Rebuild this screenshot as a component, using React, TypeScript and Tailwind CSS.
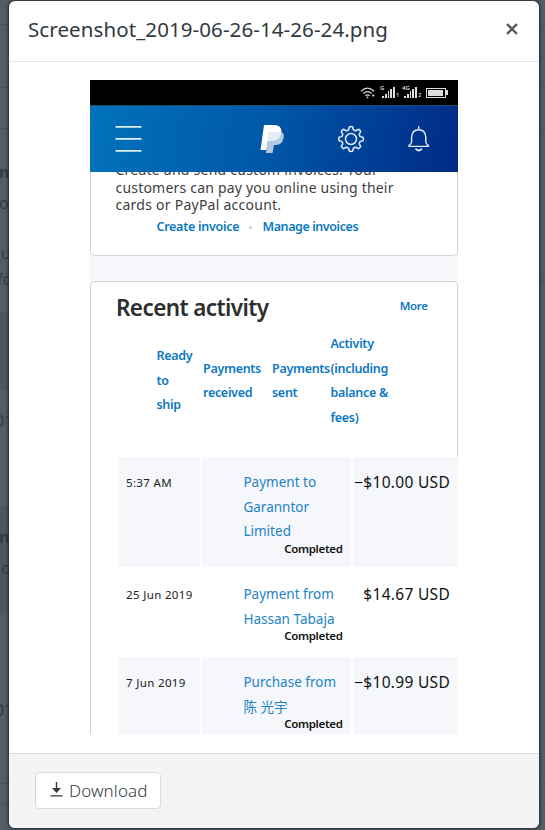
import React from "react";

type Payment = { date: string; lines: string[]; amount: string; height: string; shaded: boolean };

const payments: Payment[] = [
  { date: "5:37 AM", lines: ["Payment to", "Garanntor", "Limited"], amount: "−$10.00 USD", height: "h-[110px]", shaded: true },
  { date: "25 Jun 2019", lines: ["Payment from", "Hassan Tabaja"], amount: "$14.67 USD", height: "h-[86px]", shaded: false },
  { date: "7 Jun 2019", lines: ["Purchase from", "陈 光宇"], amount: "−$10.99 USD", height: "h-[86px]", shaded: true },
];

const ui = "font-['Noto_Sans','Open_Sans',sans-serif]";
const phone = "font-['Noto_Sans','Noto_Sans_CJK_SC',sans-serif]";

// Dimmed page that shows at both sides of the dialog
function Backdrop() {
  const left: [string, string][] = [
    ["left-[-1px] top-[162px] font-bold", "n"],
    ["left-[-1px] top-[193px]", "o"],
    ["left-px top-[243px]", "u"],
    ["left-[-3px] top-[269px]", "fo"],
    ["left-[-5px] top-[411px] text-[#2a4f6a]", "01"],
    ["left-[-1px] top-[527px] font-bold", "n"],
    ["left-px top-[558px]", "o"],
    ["left-[-5px] top-[700px] text-[#2a4f6a]", "01"],
  ];
  return (
    <div className={`absolute inset-0 overflow-hidden ${ui}`}>
      <div className="absolute left-0 top-[24px] h-px w-full bg-[#4b545a]" />
      <div className="absolute left-0 top-[87px] h-px w-full bg-[#4b545a]" />
      <div className="absolute left-0 top-[128px] h-px w-full bg-[#4b545a]" />
      <div className="absolute left-0 top-[312px] h-[78px] w-[9px] bg-[#4e575e]" />
      <div className="absolute left-0 top-[506px] h-[109px] w-[9px] bg-[#4e575e]" />
      <div className="absolute left-0 top-[783px] h-px w-full bg-[#4b545a]" />
      <div className="absolute left-0 top-[804px] h-px w-full bg-[#4b545a]" />
      {left.map(([cls, t], i) => (
        <span key={i} className={`absolute whitespace-nowrap text-[16px] leading-[20px] text-[#343b41] ${cls}`}>{t}</span>
      ))}
      <div className="absolute left-[540px] top-[276px] h-px w-[2px] bg-[#343b41]" />
      <div className="absolute left-[540px] top-[281px] h-px w-[2px] bg-[#343b41]" />
    </div>
  );
}

function Wifi() {
  return (
    <svg className="h-[12px] w-[16px]" viewBox="0 0 16 12" fill="none" stroke="#d5d5d5" strokeWidth="1.2">
      <path d="M1 4.2Q7.5-1.8 14 4.2M3.2 6.6Q7.5 2.6 11.8 6.6M5.3 8.8Q7.5 6.8 9.7 8.8" />
      <circle cx="7.5" cy="10.4" r=".9" fill="#d5d5d5" stroke="none" />
      <path d="M13.2 7.2v2.6M12 8.5h2.4" strokeWidth=".9" />
    </svg>
  );
}

function Signal({ label, sim }: { label: string; sim: string }) {
  return (
    <div className="relative flex h-[13px] w-[18px] items-end gap-[1px] pb-px pl-px">
      <span className="absolute -left-px -top-px text-[6px] font-semibold leading-[7px] text-[#e0e0e0]">{label}</span>
      <i className="h-[2px] w-[2px] bg-[#ddd]" />
      <i className="h-[4px] w-[2px] bg-[#ddd]" />
      <i className="h-[7px] w-[2px] bg-[#ddd]" />
      <i className="h-[9px] w-[2px] bg-[#ddd]" />
      <i className="h-[11px] w-[2px] bg-[#ddd]" />
      <span className="text-[5px] font-semibold leading-[5px] text-[#e0e0e0]">{sim}</span>
    </div>
  );
}

function gearPath() {
  const pts: string[] = [];
  const c = 14;
  for (let k = 0; k < 8; k++) {
    const a = (k * Math.PI) / 4 - Math.PI / 2;
    const p = (r: number, o: number) => `${(c + r * Math.cos(a + o)).toFixed(2)} ${(c + r * Math.sin(a + o)).toFixed(2)}`;
    pts.push(`${k === 0 ? "M" : "L"}${p(9.6, -0.25)}`, `L${p(12.1, -0.14)}`, `Q${p(12.8, 0)} ${p(12.1, 0.14)}`, `L${p(9.6, 0.25)}`, `Q${p(8.9, Math.PI / 8)} ${p(9.6, Math.PI / 4 - 0.25)}`);
  }
  return pts.join(" ") + "Z";
}

function PhoneHeader() {
  return (
    <div className="flex h-[67px] shrink-0 items-start border-t border-[#174f78] bg-[linear-gradient(100deg,#0073bb_0%,#0057a8_48%,#002a86_100%)]">
      <svg className="ml-[25px] mt-[19px] h-[28px] w-[27px]" viewBox="0 0 27 28" fill="#e9f1f8">
        <rect x=".5" y="1" width="26" height="1.7" />
        <rect x=".5" y="13" width="26" height="1.7" />
        <rect x=".5" y="25" width="26" height="1.7" />
      </svg>
      <svg className="ml-[118px] mt-[19px] h-[29px] w-[25px]" viewBox="0 0 25 29">
        <path d="M4 0H14Q22 0 21.5 7.5Q20 16 12 16H8L6.5 25H.5Z" fill="#fff" />
        <path d="M9 7H21.4Q24.3 8.3 23.7 12.2Q22.5 20 16 20H14L12.5 28H6L6.5 25Z" fill="#b3c9e2" />
        <path d="M9 7H21.4Q20.5 16 12 16H7.8Z" fill="#e5ecf5" />
      </svg>
      <svg className="ml-[52px] mt-[19px] h-[28px] w-[28px]" viewBox="0 0 28 28" fill="none" stroke="#e2ebf5" strokeWidth="1.5" strokeLinejoin="round">
        <path d={gearPath()} />
        <circle cx="14" cy="14" r="5.5" />
      </svg>
      <svg className="ml-[43px] mt-[20px] h-[28px] w-[22px]" viewBox="0 0 22 28" fill="none" stroke="#e2ebf5" strokeWidth="1.4" strokeLinecap="round" strokeLinejoin="round">
        <path d="M10.7 .7v3M3.6 16V11Q4 3.7 10.7 3.7Q17.4 3.7 17.8 11V16Q18.2 18.5 20.4 19.5V20.4H1V19.5Q3.2 18.5 3.6 16Z" />
        <path d="M8 23.2Q10.7 25.8 13.4 23.2" strokeWidth="1.7" />
      </svg>
    </div>
  );
}

function InvoiceCard() {
  return (
    <div className="h-[84px] shrink-0 overflow-hidden rounded-b-[5px] border border-t-0 border-[#ccd3d6] bg-white">
      <div className="-mt-[11px] pl-[24.5px] text-[14px] leading-[17.5px] text-[#3c3e40]">
        <p className="whitespace-nowrap pt-px leading-[16.5px] tracking-[0.24px]">Create and send custom invoices. Your</p>
        <p className="whitespace-nowrap tracking-[0.2px]">customers can pay you online using their</p>
        <p className="whitespace-nowrap tracking-[0.25px]">cards or PayPal account.</p>
      </div>
      <div className="flex items-center pl-[65.5px] pt-[4.5px] text-[12.5px] font-semibold leading-[18px] text-[#0b78c1]">
        <span className="w-[83px] whitespace-nowrap tracking-[-0.28px]">Create invoice</span>
        <i className="ml-[9px] mr-[11px] h-[3px] w-[3px] rounded-full bg-[#c4cdd3]" />
        <span className="whitespace-nowrap tracking-[-0.42px]">Manage invoices</span>
      </div>
    </div>
  );
}

function PaymentRow({ p }: { p: Payment }) {
  const bg = p.shaded ? "bg-[#f5f7fb]" : "bg-white";
  return (
    <div className={`flex shrink-0 gap-[2px] ${p.height}`}>
      <div className={`w-[82.5px] whitespace-nowrap pl-[8.5px] pt-[14px] text-[11.5px] leading-[24.5px] tracking-[0.35px] text-[#222] ${bg}`}>{p.date}</div>
      <div className={`w-[149px] pl-[41.5px] pt-[13px] ${bg}`}>
        {p.lines.map((l) => (
          <p key={l} className="whitespace-nowrap text-[13.5px] leading-[24.5px] tracking-[0.02px] text-[#2283c6]">{l}</p>
        ))}
        <p className="-mt-[2px] whitespace-nowrap pr-[8px] text-right text-[11.5px] font-semibold leading-[14px] tracking-[-0.3px] text-[#111]">Completed</p>
      </div>
      <div className={`w-[105.5px] whitespace-nowrap pr-[8px] pt-[13px] text-[15.5px] leading-[24.5px] tracking-[0.3px] text-[#111] ${bg}`}>
        <span className="float-right">{p.amount}</span>
      </div>
    </div>
  );
}

function ActivityCard() {
  return (
    <div className="flex h-[453px] shrink-0 flex-col overflow-hidden">
      <div className="h-[176px] shrink-0 rounded-t-[5px] border border-b-0 border-[#ccd3d6] bg-white">
        <div className="flex items-start justify-between pl-[25px] pr-[29.5px] pt-[9px]">
          <h2 className="whitespace-nowrap text-[22.5px] font-semibold leading-[34px] tracking-[-0.6px] text-[#2c2e2f]">Recent activity</h2>
          <span className="pt-[6px] text-[11.5px] font-semibold leading-[18px] tracking-[-0.4px] text-[#0b78c1]">More</span>
        </div>
        <div className="mt-[7px] flex h-[98px] items-center whitespace-nowrap pl-[65.5px] text-[12.5px] font-semibold leading-[24.5px] tracking-[-0.3px] text-[#0b78c1]">
          <div className="w-[46.5px]">Ready<br />to<br />ship</div>
          <div className="w-[69px]">Payments<br />received</div>
          <div className="w-[58.5px]">Payments<br />sent</div>
          <div>Activity<br />(including<br />balance &amp;<br />fees)</div>
        </div>
      </div>
      <div className="flex flex-col gap-[2px] border-l border-[#ccd3d6] bg-white pl-[26.5px]">
        {payments.map((p) => <PaymentRow key={p.date} p={p} />)}
      </div>
    </div>
  );
}

export default function App() {
  return (
    <div className="relative h-[830px] w-[545px] overflow-hidden bg-[#535d64]">
      <Backdrop />
      <div className="relative px-[9px] pr-[6px] pt-px">
        <div className={`flex h-[827px] w-[530px] flex-col overflow-hidden rounded-[6px] bg-white shadow-[0_0_3px_1px_rgba(20,25,30,0.75)] ${ui}`}>
          <header className="flex h-[61px] shrink-0 items-center justify-between border-b border-[#e6e7e8] pl-[19px] pr-[21px]">
            <h1 className="-mt-[4px] whitespace-nowrap text-[20.5px] leading-[28px] tracking-[0.09px] text-[#32393f]">Screenshot_2019-06-26-14-26-24.png</h1>
            <svg className="mt-[-5px] h-[12px] w-[12px]" viewBox="0 0 12 12" stroke="#545b61" strokeWidth="2.4"><path d="M1 1l10 10M11 1L1 11" /></svg>
          </header>
          <main className="h-[691px] shrink-0 pl-[81px] pt-[18px]">
            <div className={`flex h-[654px] w-[368px] flex-col overflow-hidden bg-[#f5f7fb] ${phone}`}>
              <div className="flex h-[25px] shrink-0 items-center bg-black pl-[270px]">
                <Wifi />
                <div className="ml-[5px] flex gap-[4px]">
                  <Signal label="G" sim="1" />
                  <Signal label="4G" sim="2" />
                </div>
                <div className="ml-[5px] flex h-[10px] w-[20px] border border-[#ddd] p-px"><i className="h-full w-[15px] bg-[#ddd]" /></div>
                <i className="h-[5px] w-[2px] bg-[#ddd]" />
              </div>
              <PhoneHeader />
              <InvoiceCard />
              <div className="h-[25px] shrink-0" />
              <ActivityCard />
            </div>
          </main>
          <footer className="flex flex-1 items-start border-t border-[#d9dadc] bg-[#f4f4f4] pl-[26px] pt-[18px]">
            <button className="flex h-[37px] w-[126px] items-center rounded-[4px] border border-[#d9dbdd] bg-white pl-[14px] text-[17px] font-light tracking-[0.1px] text-[#32393f]">
              <svg className="-mt-[2px] h-[15px] w-[13px]" viewBox="0 0 13 15" fill="#32393f"><path d="M5.8 0h1.4v6H11L6.5 11 2 6h3.8zM.5 13.2h12v1.3H.5z" /></svg>
              <span className="ml-[6px] whitespace-nowrap">Download</span>
            </button>
          </footer>
        </div>
      </div>
    </div>
  );
}
